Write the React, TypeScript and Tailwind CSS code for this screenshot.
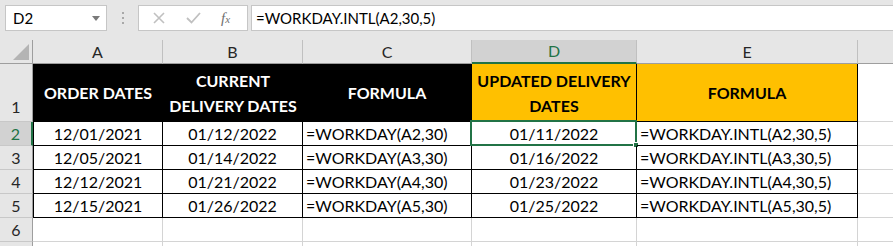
import { Fragment } from 'react';

const rows = [
  ['12/01/2021', '01/12/2022', '=WORKDAY(A2,30)', '01/11/2022', '=WORKDAY.INTL(A2,30,5)'],
  ['12/05/2021', '01/14/2022', '=WORKDAY(A3,30)', '01/16/2022', '=WORKDAY.INTL(A3,30,5)'],
  ['12/12/2021', '01/21/2022', '=WORKDAY(A4,30)', '01/23/2022', '=WORKDAY.INTL(A4,30,5)'],
  ['12/15/2021', '01/26/2022', '=WORKDAY(A5,30)', '01/25/2022', '=WORKDAY.INTL(A5,30,5)'],
];

const font = { fontFamily: 'Lato, "Liberation Sans", sans-serif' };

const ColHead = ({ label, selected }: { label: string; selected?: boolean }) => (
  <div
    className={`flex items-center justify-center border-r text-[16px] ${
      selected
        ? 'bg-[#d2d2d2] text-[#217346] border-r-[#c0c0c0] border-b-2 border-b-[#217346]'
        : 'bg-[#e6e6e6] text-[#262626] border-r-[#c0c0c0] border-b border-b-[#9e9e9e]'
    }`}
  >
    {label}
  </div>
);

const RowHead = ({ n, selected, tall }: { n?: number; selected?: boolean; tall?: boolean }) => (
  <div
    className={`flex justify-center border-b border-b-[#c8c8c8] text-[16px] ${
      tall ? 'items-end pb-[2px]' : 'items-center'
    } ${
      selected
        ? 'bg-[#d2d2d2] text-[#217346] border-r-2 border-r-[#217346]'
        : 'bg-[#e6e6e6] text-[#262626] border-r border-r-[#9e9e9e]'
    }`}
  >
    {n}
  </div>
);

export default function App() {
  return (
    <div className="w-[893px] h-[246px] overflow-hidden bg-white text-black" style={font}>
      {/* toolbar */}
      <div className="h-[40px] bg-[#e6e6e6] flex items-start pt-[5px] pl-[5px]">
        <div className="w-[102px] h-[26px] bg-white border border-[#c6c6c6] flex items-center justify-between pl-[7px] pr-[6px] text-[15px]">
          <span>D2</span>
          <svg width="8" height="5" viewBox="0 0 8 5">
            <path d="M0 0h8L4 5z" fill="#7a7a7a" />
          </svg>
        </div>
        <div className="w-[31px] h-[26px] flex flex-col items-center justify-center gap-[3px]">
          <span className="w-[2px] h-[2px] bg-[#a8a8a8]" />
          <span className="w-[2px] h-[2px] bg-[#a8a8a8]" />
          <span className="w-[2px] h-[2px] bg-[#a8a8a8]" />
        </div>
        <div className="w-[110px] h-[26px] bg-white border border-[#c6c6c6] flex items-center">
          <svg width="14" height="14" viewBox="0 0 14 14" className="ml-[13px]">
            <path d="M2 2l10 10M12 2L2 12" stroke="#c0c0c0" strokeWidth="1.6" />
          </svg>
          <svg width="15" height="14" viewBox="0 0 15 14" className="ml-[20px]">
            <path d="M1 7l4.5 4.5L14 2" stroke="#c0c0c0" strokeWidth="1.8" fill="none" />
          </svg>
          <span
            className="ml-[20px] text-[15px] italic text-[#6f6f6f]"
            style={{ fontFamily: '"Liberation Serif", serif' }}
          >
            f<span className="text-[11px]">x</span>
          </span>
        </div>
        <div className="flex-1 ml-[3px] h-[26px] bg-white border-y border-l border-[#c6c6c6] flex items-center pl-[4px] text-[15px]">
          =WORKDAY.INTL(A2,30,5)
        </div>
      </div>

      {/* sheet */}
      <div className="grid grid-cols-[33px_130px_140px_169px_165px_221px_1fr] grid-rows-[24px_58px_24px_24px_24px_24px_24px_24px]">
        <div className="bg-[#e6e6e6] border-r border-r-[#9e9e9e] border-b border-b-[#9e9e9e] flex items-end justify-end pr-[3px] pb-[3px]">
          <svg width="16" height="16" viewBox="0 0 16 16">
            <path d="M16 0V16H0z" fill="#b4b4b4" />
          </svg>
        </div>
        <ColHead label="A" />
        <ColHead label="B" />
        <ColHead label="C" />
        <ColHead label="D" selected />
        <ColHead label="E" />
        <div className="bg-[#e6e6e6] border-b border-b-[#9e9e9e]" />

        {/* row 1 */}
        <RowHead n={1} tall />
        <div className="bg-black text-white font-bold text-[16px] flex items-center justify-center text-center leading-[25px] border-b border-black">
          ORDER DATES
        </div>
        <div className="bg-black text-white font-bold text-[16px] flex items-center justify-center text-center leading-[25px] border-b border-black">
          CURRENT
          <br />
          DELIVERY DATES
        </div>
        <div className="bg-black text-white font-bold text-[16px] flex items-center justify-center text-center leading-[25px] border-r border-b border-black">
          FORMULA
        </div>
        <div className="bg-[#ffc000] text-black font-bold text-[16px] flex items-center justify-center text-center leading-[25px] border-r border-b border-black">
          UPDATED DELIVERY
          <br />
          DATES
        </div>
        <div className="bg-[#ffc000] text-black font-bold text-[16px] flex items-center justify-center text-center leading-[25px] border-r border-b border-black">
          FORMULA
        </div>
        <div className="border-b border-b-[#d4d4d4]" />

        {rows.map((r, i) => (
          <Fragment key={i}>
            <RowHead n={i + 2} selected={i === 0} />
            {r.map((v, j) => (
              <div
                key={j}
                className={`relative flex items-center text-[16px] border-r border-b border-black ${
                  j === 2 || j === 4 ? 'justify-start pl-[3px]' : 'justify-center'
                } ${j === 0 ? 'border-l' : ''}`}
              >
                {v}
                {i === 0 && j === 3 && (
                  <div className="absolute left-[-2px] top-[-2px] right-[-1px] bottom-[-1px] border-2 border-[#217346]">
                    <div className="absolute right-[-4px] bottom-[-4px] w-[6px] h-[6px] bg-[#217346] border border-white" />
                  </div>
                )}
              </div>
            ))}
            <div className="border-b border-b-[#d4d4d4]" />
          </Fragment>
        ))}

        {[6, 7].map((n) => (
          <Fragment key={n}>
            <RowHead n={n === 6 ? 6 : undefined} />
            {[0, 1, 2, 3, 4].map((j) => (
              <div key={j} className="border-r border-b border-[#d4d4d4]" />
            ))}
            <div className="border-b border-[#d4d4d4]" />
          </Fragment>
        ))}
      </div>
    </div>
  );
}
